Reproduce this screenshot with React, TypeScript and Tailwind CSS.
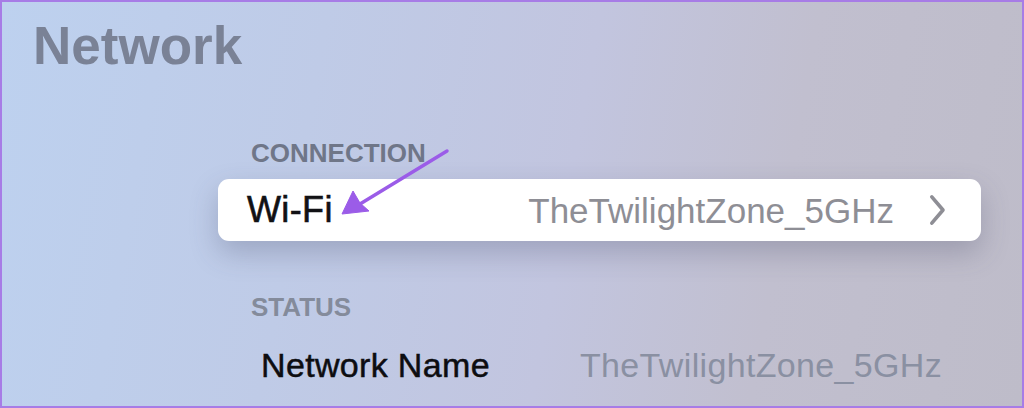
import React from "react";

export default function App() {
  return (
    <div
      className="relative w-[1024px] h-[408px] overflow-hidden border-2 border-[#a77ce6] bg-[linear-gradient(100deg,#bdd1ef_0%,#bfcbe7_30%,#c2c5df_55%,#c1bfcf_75%,#bebcc9_100%)]"
      style={{ fontFamily: '"Liberation Sans", Arial, sans-serif' }}
    >
      <div className="pt-[18px] pl-[31px]">
        <h1 className="text-[53px] leading-[52px] font-bold text-[#7a8296]">Network</h1>
      </div>
      <div className="ml-[216px] w-[763px]">
        <div className="mt-[68px] pl-[33px] text-[26px] leading-[26px] font-bold text-[#6f7688]">
          CONNECTION
        </div>
        <div className="mt-[13px] h-[62px] rounded-[11px] bg-white shadow-[0_12px_28px_rgba(70,72,100,0.28)] flex items-center pl-[29px] pr-[35px]">
          <span className="text-[36px] leading-none text-[#111114] tracking-[0.01em] [-webkit-text-stroke:0.6px_#111114]">Wi-Fi</span>
          <span className="ml-auto text-[35px] leading-none text-[#8e8e95]">TheTwilightZone_5GHz</span>
          <svg className="ml-[35px]" width="17" height="32" viewBox="0 0 17 32" fill="none">
            <path d="M2.8 2.8 L14 16 L2.8 29.2" stroke="#8e8e95" strokeWidth="3.6" strokeLinecap="round" strokeLinejoin="round" />
          </svg>
        </div>
        <div className="mt-[53px] pl-[33px] text-[26px] leading-[26px] font-bold text-[#848b9b]">
          STATUS
        </div>
        <div className="mt-[28px] pl-[43px] flex items-center">
          <span className="w-[319px] text-[34px] leading-[34px] text-[#0d0d10] tracking-[0.01em] [-webkit-text-stroke:0.5px_#0d0d10]">Network Name</span>
          <span className="text-[34px] leading-[34px] text-[#8a90a2] tracking-[0.01em]">TheTwilightZone_5GHz</span>
        </div>
      </div>
      <svg className="absolute left-0 top-0 pointer-events-none" width="1024" height="408" viewBox="0 0 1024 408">
        <line x1="445" y1="149" x2="358" y2="202" stroke="#9b5ce8" strokeWidth="3.5" strokeLinecap="round" />
        <polygon points="340,212 351,189 358,201 367,209" fill="#9b5ce8" stroke="#9b5ce8" strokeWidth="1" strokeLinejoin="round" />
      </svg>
    </div>
  );
}
